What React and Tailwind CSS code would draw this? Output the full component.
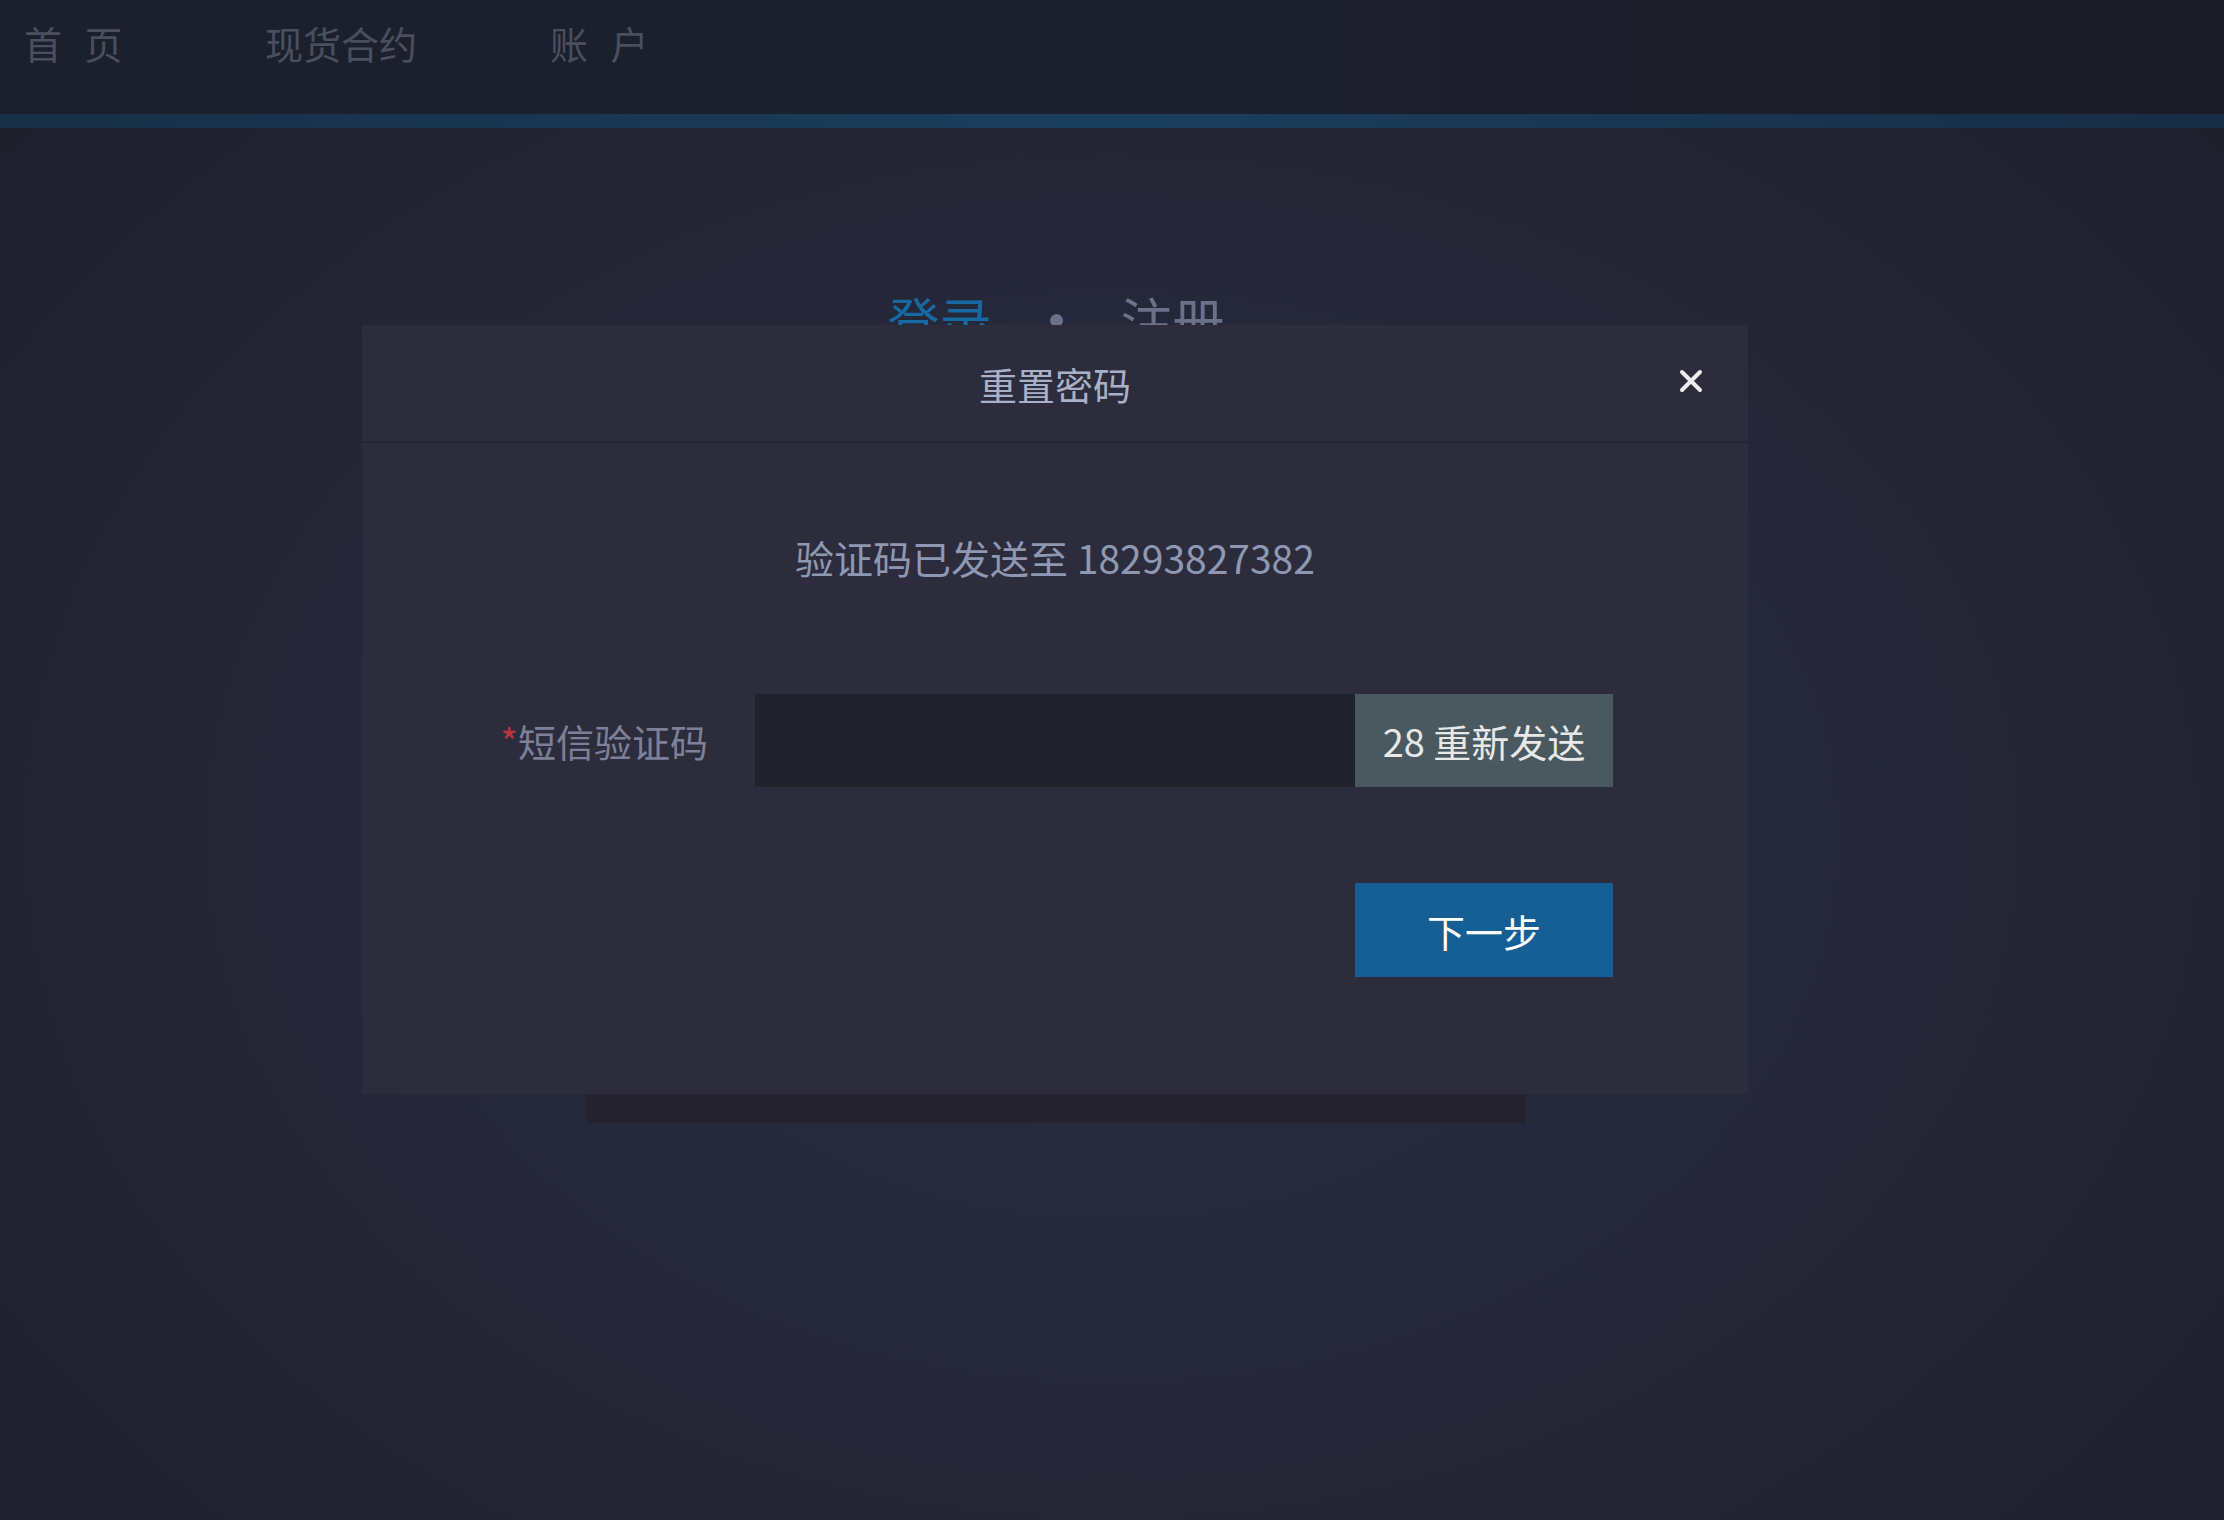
export default function App() {
  return (
    <div
      className="relative min-h-screen w-full overflow-hidden bg-[radial-gradient(ellipse_at_50%_55%,#2a2e42_0%,#252839_45%,#1d1f2b_100%)]"
      style={{ fontFamily: '"Noto Sans CJK SC", "Noto Sans", sans-serif' }}
    >
      {/* top nav */}
      <div className="h-[114px] bg-[linear-gradient(90deg,#1c1f2c_0%,#1c1f2c_60%,#1a1b27_100%)]">
        <div className="flex h-[84px] items-center pl-[24px] text-[38px] text-[#4a4e5e]">
          <div className="w-[241px] [word-spacing:14px]">首 页</div>
          <div className="w-[285px]">现货合约</div>
          <div className="[word-spacing:14px]">账 户</div>
        </div>
      </div>
      <div className="h-[14px] bg-[linear-gradient(90deg,#172f47_0%,#1a3f5e_50%,#172d45_100%)]"></div>

      {/* login card behind the dialog */}
      <div className="ml-[586px] w-[940px]">
        <div className="mt-[166px] flex items-center justify-center gap-[58px] text-[52px] leading-none">
          <span className="text-[#1769a2]">登录</span>
          <span className="h-[13px] w-[13px] rounded-full bg-[#6b7188]"></span>
          <span className="text-[#6b7188]">注册</span>
        </div>
        <div className="mt-[746px] h-[31px] bg-[#23222e]"></div>
      </div>

      {/* reset password dialog */}
      <div className="absolute left-[362px] top-[325px] h-[769px] w-[1386px] bg-[#2d2c3c]">
        <div className="relative flex h-[118px] items-center justify-center border-b-2 border-[#25252f]">
          <span className="text-[38px] text-[#a9b1c9]">重置密码</span>
          <button className="absolute right-[45px] top-[44px] flex h-[24px] w-[24px] items-center justify-center">
            <svg width="24" height="24" viewBox="0 0 24 24" fill="none" stroke="#ececec" strokeWidth="4" strokeLinecap="round">
              <path d="M3 3L21 21M21 3L3 21" />
            </svg>
          </button>
        </div>

        <div className="pt-[87px]">
          <div className="text-center text-[39px] leading-[54px] text-[#8f98b3]">验证码已发送至 18293827382</div>

          <div className="mt-[110px] flex h-[93px] items-center">
            <div className="flex w-[346px] justify-end text-[38px] text-[#7c8199]">
              <span className="text-[#b8353d]">*</span>
              <span>短信验证码</span>
            </div>
            <input className="ml-[47px] h-[93px] w-[600px] bg-[#22222d] px-6 text-[38px] text-[#a9b1c9] outline-none" />
            <button className="h-[93px] w-[258px] bg-[#4a5960] text-[38px] text-[#e8e8e8]">28 重新发送</button>
          </div>

          <div className="mt-[96px] flex justify-end pr-[135px]">
            <button className="h-[94px] w-[258px] bg-[#155f94] text-[38px] text-white">下一步</button>
          </div>
        </div>
      </div>
    </div>
  );
}
